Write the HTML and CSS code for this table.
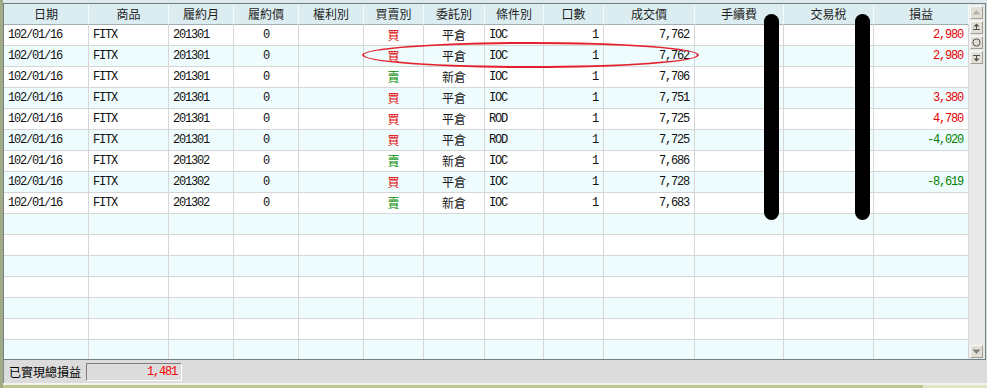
FILE: index.html
```html
<!DOCTYPE html>
<html>
<head>
<meta charset="utf-8">
<link rel="stylesheet" href="styles.css">
</head>
<body>
<div class="app">
  <div class="topline"></div>
  <div class="frame">
    <div class="grid">
      <div class="row head">
        <div>日期</div><div>商品</div><div>履約月</div><div>履約價</div><div>權利別</div><div>買賣別</div><div>委託別</div><div>條件別</div><div>口數</div><div>成交價</div><div>手續費</div><div>交易稅</div><div>損益</div>
      </div>
      <div class="body">
        <div class="row odd">
          <div class="m l">102/01/16</div><div class="m l">FITX</div><div class="m l">201301</div><div class="m c">0</div><div></div><div class="k c buy">買</div><div class="k c">平倉</div><div class="m l">IOC</div><div class="m r">1</div><div class="m r">7,762</div><div></div><div></div><div class="m r pos">2,980</div>
        </div>
        <div class="row even">
          <div class="m l">102/01/16</div><div class="m l">FITX</div><div class="m l">201301</div><div class="m c">0</div><div></div><div class="k c buy">買</div><div class="k c">平倉</div><div class="m l">IOC</div><div class="m r">1</div><div class="m r">7,762</div><div></div><div></div><div class="m r pos">2,980</div>
        </div>
        <div class="row odd">
          <div class="m l">102/01/16</div><div class="m l">FITX</div><div class="m l">201301</div><div class="m c">0</div><div></div><div class="k c sell">賣</div><div class="k c">新倉</div><div class="m l">IOC</div><div class="m r">1</div><div class="m r">7,706</div><div></div><div></div><div class="m r"></div>
        </div>
        <div class="row even">
          <div class="m l">102/01/16</div><div class="m l">FITX</div><div class="m l">201301</div><div class="m c">0</div><div></div><div class="k c buy">買</div><div class="k c">平倉</div><div class="m l">IOC</div><div class="m r">1</div><div class="m r">7,751</div><div></div><div></div><div class="m r pos">3,380</div>
        </div>
        <div class="row odd">
          <div class="m l">102/01/16</div><div class="m l">FITX</div><div class="m l">201301</div><div class="m c">0</div><div></div><div class="k c buy">買</div><div class="k c">平倉</div><div class="m l">ROD</div><div class="m r">1</div><div class="m r">7,725</div><div></div><div></div><div class="m r pos">4,780</div>
        </div>
        <div class="row even">
          <div class="m l">102/01/16</div><div class="m l">FITX</div><div class="m l">201301</div><div class="m c">0</div><div></div><div class="k c buy">買</div><div class="k c">平倉</div><div class="m l">ROD</div><div class="m r">1</div><div class="m r">7,725</div><div></div><div></div><div class="m r neg">-4,020</div>
        </div>
        <div class="row odd">
          <div class="m l">102/01/16</div><div class="m l">FITX</div><div class="m l">201302</div><div class="m c">0</div><div></div><div class="k c sell">賣</div><div class="k c">新倉</div><div class="m l">IOC</div><div class="m r">1</div><div class="m r">7,686</div><div></div><div></div><div class="m r"></div>
        </div>
        <div class="row even">
          <div class="m l">102/01/16</div><div class="m l">FITX</div><div class="m l">201302</div><div class="m c">0</div><div></div><div class="k c buy">買</div><div class="k c">平倉</div><div class="m l">IOC</div><div class="m r">1</div><div class="m r">7,728</div><div></div><div></div><div class="m r neg">-8,619</div>
        </div>
        <div class="row odd">
          <div class="m l">102/01/16</div><div class="m l">FITX</div><div class="m l">201302</div><div class="m c">0</div><div></div><div class="k c sell">賣</div><div class="k c">新倉</div><div class="m l">IOC</div><div class="m r">1</div><div class="m r">7,683</div><div></div><div></div><div class="m r"></div>
        </div>
        <div class="row even"><div></div><div></div><div></div><div></div><div></div><div></div><div></div><div></div><div></div><div></div><div></div><div></div><div></div></div>
        <div class="row odd"><div></div><div></div><div></div><div></div><div></div><div></div><div></div><div></div><div></div><div></div><div></div><div></div><div></div></div>
        <div class="row even"><div></div><div></div><div></div><div></div><div></div><div></div><div></div><div></div><div></div><div></div><div></div><div></div><div></div></div>
        <div class="row odd"><div></div><div></div><div></div><div></div><div></div><div></div><div></div><div></div><div></div><div></div><div></div><div></div><div></div></div>
        <div class="row even"><div></div><div></div><div></div><div></div><div></div><div></div><div></div><div></div><div></div><div></div><div></div><div></div><div></div></div>
        <div class="row odd"><div></div><div></div><div></div><div></div><div></div><div></div><div></div><div></div><div></div><div></div><div></div><div></div><div></div></div>
        <div class="row even"><div></div><div></div><div></div><div></div><div></div><div></div><div></div><div></div><div></div><div></div><div></div><div></div><div></div></div>
      </div>
    </div>
    <div class="scroll">
      <div class="sb-group">
        <div class="sb-btn"><svg width="11" height="11" viewBox="0 0 11 11"><polygon points="5.5,3 1.5,7.5 9.5,7.5" fill="#b4b2aa"/></svg></div>
        <div class="sb-btn"><svg width="11" height="11" viewBox="0 0 11 11"><polygon points="5.5,1.5 2.5,4.5 8.5,4.5" fill="#505050"/><rect x="5" y="4" width="1" height="3" fill="#505050"/><rect x="2" y="7" width="7" height="1" fill="#505050"/></svg></div>
        <div class="sb-btn"><svg width="11" height="11" viewBox="0 0 11 11"><circle cx="5.5" cy="5.5" r="3.6" fill="none" stroke="#505050" stroke-width="1"/></svg></div>
        <div class="sb-btn"><svg width="11" height="11" viewBox="0 0 11 11"><rect x="2" y="3" width="7" height="1" fill="#505050"/><rect x="5" y="4" width="1" height="3" fill="#505050"/><polygon points="5.5,9.5 2.5,6.5 8.5,6.5" fill="#505050"/></svg></div>
      </div>
      <div class="sb-btn"><svg width="11" height="11" viewBox="0 0 11 11"><polygon points="5.5,8 1.5,3.5 9.5,3.5" fill="#808078"/></svg></div>
    </div>
  </div>
  <div class="footer">
    <span class="flabel">已實現總損益</span>
    <div class="fbox">1,481</div>
  </div>
  <div class="sep"></div>
  <div class="strip"></div>

  <div class="ring"></div>
  <div class="bar bar1"></div>
  <div class="bar bar2"></div>
</div>
</body>
</html>
```

FILE: styles.css
```css
* { box-sizing: border-box; }
html, body { margin: 0; padding: 0; }
body {
  width: 987px;
  height: 388px;
  overflow: hidden;
  background: #dcdcdc;
  font-family: "Noto Sans CJK TC", "Liberation Sans", sans-serif;
  font-size: 12px;
  color: #1a1a1a;
}
.app {
  position: relative;
  width: 987px;
  height: 388px;
  border-left: 3px solid #a3aa88;
  display: flex;
  flex-direction: column;
  background: #dcdcdc;
}
.topline {
  height: 3px;
  background: #dde9ec;
}
.frame {
  width: 983px;
  height: 357px;
  border: 1px solid #6f8083;
  display: flex;
  background: #ebebeb;
}
.grid {
  width: 965px;
  display: flex;
  flex-direction: column;
  background: #fff;
}
.row {
  display: grid;
  grid-template-columns: 85px 80px 65px 65px 65px 60px 61px 59px 60px 91px 89px 90px 95px;
  height: 21px;
}
.row > div {
  height: 21px;
  line-height: 20px;
  border-right: 1px solid #d6d6d6;
  border-bottom: 1px solid #d6d6d6;
  white-space: nowrap;
  overflow: hidden;
  padding: 0 4px;
}
.head {
  background: #dcedf1;
}
.head > div {
  text-align: center;
  border-right: 1px solid #f6fbfc;
  border-bottom: 1px solid #a2b0b3;
  color: #1e1e1e;
  padding: 0;
}
.body {
  height: 334px;
  overflow: hidden;
}
.odd { background: #ffffff; }
.even { background: #effcfe; }
.m {
  font-family: "Liberation Mono", monospace;
  font-size: 12px;
  letter-spacing: -1.2px;
  color: #101010;
}
.k {
  font-family: "Noto Sans CJK TC", sans-serif;
  font-size: 12px;
}
.l { text-align: left; }
.c { text-align: center; }
.r { text-align: right; }
.row > .r { padding-right: 5px; }
.buy { color: #e00000; }
.sell { color: #008c00; }
.row > .pos { color: #e60000; }
.row > .neg { color: #008000; }

.scroll {
  width: 16px;
  display: flex;
  flex-direction: column;
  justify-content: space-between;
  padding: 2px 2px 1px 1px;
  background: #e9e9e9;
}
.sb-group {
  display: flex;
  flex-direction: column;
  gap: 2px;
}
.sb-btn {
  width: 13px;
  height: 13px;
  background: #e2e0d6;
  border: 1px solid;
  border-color: #fbfbf8 #a09d92 #a09d92 #fbfbf8;
  display: flex;
  align-items: center;
  justify-content: center;
}
.sb-btn svg { display: block; }

.footer {
  height: 23px;
  display: flex;
  align-items: center;
  gap: 5px;
  padding-left: 5px;
  border-left: 1px solid #7a8a8b;
  background: #dcdcdc;
}
.flabel {
  font-size: 12px;
  color: #000;
  width: 72px;
}
.fbox {
  width: 96px;
  height: 18px;
  border: 1px solid;
  border-color: #7e7e7e #ffffff #ffffff #7e7e7e;
  text-align: right;
  padding-right: 4px;
  line-height: 16px;
  font-family: "Liberation Mono", monospace;
  letter-spacing: -1.2px;
  color: #ff0000;
  background: #dcdcdc;
}
.sep {
  height: 2px;
  background: #f3f3ef;
}
.strip {
  height: 3px;
  background: linear-gradient(to right, #bac78f 0, #bac78f 93.5%, #e0e5c9 93.5%);
}

.ring {
  position: absolute;
  left: 359px;
  top: 42px;
  width: 337px;
  height: 26px;
  border: 2px solid #e4202c;
  border-radius: 50%;
}
.bar {
  position: absolute;
  top: 14px;
  width: 15px;
  height: 206px;
  background: #000;
  border-radius: 8px;
}
.bar1 { left: 761px; }
.bar2 { left: 852px; }
```
